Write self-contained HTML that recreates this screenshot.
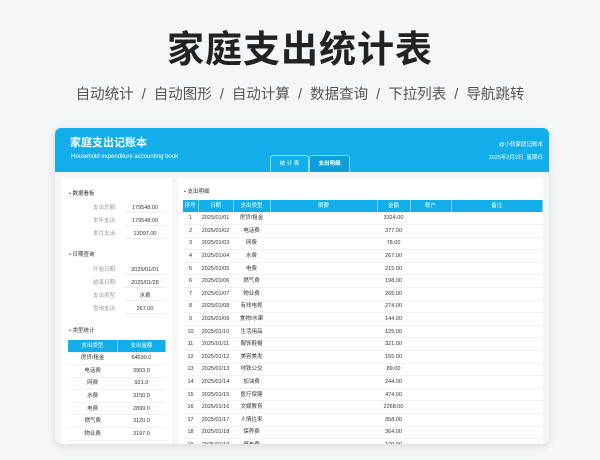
<!DOCTYPE html><html><head><meta charset="utf-8"><style>
*{margin:0;padding:0;box-sizing:border-box}
body{width:600px;height:460px;background:#f5f6f8;font-family:"Liberation Sans","Noto Sans CJK SC",sans-serif;position:relative;overflow:hidden;color:#333}
.a{position:absolute;white-space:nowrap;line-height:1.2}
h1{position:absolute;left:0;width:600px;top:27px;text-align:center;font-size:37px;font-weight:bold;color:#222;letter-spacing:1px;line-height:46px}
.sub{position:absolute;left:0;width:600px;top:85px;text-align:center;font-size:14.5px;color:#555;line-height:20px}
.card{position:absolute;left:55px;top:128px;width:494px;height:316px;background:#f3f5f7;border-radius:6px;overflow:hidden;box-shadow:0 2px 8px rgba(0,0,0,.12)}
.hd{position:absolute;left:0;top:0;width:494px;height:44px;background:#12aeea}
.tab{position:absolute;top:27px;height:17px;border:1px solid #8fd6f5;border-bottom:none;border-radius:3px 3px 0 0;color:#fff;font-size:5.5px;text-align:center;line-height:16px}
.pl{position:absolute;background:#fff}
table{border-collapse:collapse;font-size:5.5px;position:absolute}
td{height:12.6px;line-height:8px;text-align:center;vertical-align:middle;border-bottom:1px solid #f0f2f4;padding:0}
tr.h td{background:#12aeea;color:#fff;height:12px;border-right:1px solid #7fd2f3}
.lab{color:#999;font-size:5.5px}
.val{font-size:5.5px;border-bottom:1px solid #eee;width:42px;text-align:center}
.sec{font-size:5.5px;color:#333}
</style></head><body>
<h1>家庭支出统计表</h1>
<div class="sub">自动统计 &nbsp;/&nbsp; 自动图形 &nbsp;/&nbsp; 自动计算 &nbsp;/&nbsp; 数据查询 &nbsp;/&nbsp; 下拉列表 &nbsp;/&nbsp; 导航跳转</div>
<div class="card">
<div class="hd">
<div class="a" style="left:15px;top:9px;font-size:11px;font-weight:bold;color:#fff;line-height:13px">家庭支出记账本</div>
<div class="a" style="left:16px;top:26px;font-size:6px;color:#fff;line-height:7px">Household expenditure accounting book</div>
<div class="tab" style="left:215px;width:39px">统 计 表</div>
<div class="tab" style="left:254px;width:41px;background:#0c9fdb;font-weight:bold">支出明细</div>
<div class="a" style="right:6px;top:14px;font-size:5.5px;color:#fff;line-height:7px">@小软家庭记账本</div>
<div class="a" style="right:6px;top:27px;font-size:5.5px;color:#fff;line-height:7px">2025年2月2日 &nbsp;星期日</div>
</div>
<div class="pl" style="left:6px;top:50px;width:111px;height:270px">
<div class="a sec" style="left:8px;top:13px">• 数据看板</div>
<div class="a lab" style="left:32px;top:27px">支出总额:</div><div class="a val" style="left:63px;top:27px">179548.00</div>
<div class="a lab" style="left:32px;top:40px">本年支出:</div><div class="a val" style="left:63px;top:40px">179548.00</div>
<div class="a lab" style="left:32px;top:53px">本月支出:</div><div class="a val" style="left:63px;top:53px">13097.00</div>
<div class="a sec" style="left:8px;top:74px">• 日期查询</div>
<div class="a lab" style="left:32px;top:89px">开始日期:</div><div class="a val" style="left:63px;top:89px">2025/01/01</div>
<div class="a lab" style="left:32px;top:102px">结束日期:</div><div class="a val" style="left:63px;top:102px">2025/01/28</div>
<div class="a lab" style="left:32px;top:115px">支出类型:</div><div class="a val" style="left:63px;top:115px">水费</div>
<div class="a lab" style="left:32px;top:128px">查询支出:</div><div class="a val" style="left:63px;top:128px">267.00</div>
<div class="a sec" style="left:8px;top:150px">• 类型统计</div>
<table style="left:7px;top:162px;width:98px">
<tr class="h"><td>支出类型</td><td>支出金额</td></tr>
<tr><td>房贷/租金</td><td>64630.0</td></tr><tr><td>电话费</td><td>3903.0</td></tr><tr><td>网费</td><td>921.0</td></tr><tr><td>水费</td><td>3150.0</td></tr><tr><td>电费</td><td>2899.0</td></tr><tr><td>燃气费</td><td>3120.0</td></tr><tr><td>物业费</td><td>3197.0</td></tr>
</table>
</div>
<div class="pl" style="left:123px;top:50px;width:365px;height:270px">
<div class="a sec" style="left:6px;top:11px">• 支出明细</div>
<table style="left:5px;top:22px;width:360px">
<tr class="h"><td style="width:15px">序号</td><td style="width:35px">日期</td><td style="width:37px">支出类型</td><td style="width:107px">摘要</td><td style="width:33px">金额</td><td style="width:41px">账户</td><td>备注</td></tr>
<tr><td>1</td><td>2025/01/01</td><td>房贷/租金</td><td></td><td>3324.00</td><td></td><td></td></tr>
<tr><td>2</td><td>2025/01/02</td><td>电话费</td><td></td><td>377.00</td><td></td><td></td></tr>
<tr><td>3</td><td>2025/01/03</td><td>网费</td><td></td><td>78.00</td><td></td><td></td></tr>
<tr><td>4</td><td>2025/01/04</td><td>水费</td><td></td><td>267.00</td><td></td><td></td></tr>
<tr><td>5</td><td>2025/01/05</td><td>电费</td><td></td><td>215.00</td><td></td><td></td></tr>
<tr><td>6</td><td>2025/01/06</td><td>燃气费</td><td></td><td>198.00</td><td></td><td></td></tr>
<tr><td>7</td><td>2025/01/07</td><td>物业费</td><td></td><td>265.00</td><td></td><td></td></tr>
<tr><td>8</td><td>2025/01/08</td><td>有线电视</td><td></td><td>274.00</td><td></td><td></td></tr>
<tr><td>9</td><td>2025/01/09</td><td>食物/水果</td><td></td><td>144.00</td><td></td><td></td></tr>
<tr><td>10</td><td>2025/01/10</td><td>生活用品</td><td></td><td>125.00</td><td></td><td></td></tr>
<tr><td>11</td><td>2025/01/11</td><td>服饰鞋帽</td><td></td><td>321.00</td><td></td><td></td></tr>
<tr><td>12</td><td>2025/01/12</td><td>美容美发</td><td></td><td>155.00</td><td></td><td></td></tr>
<tr><td>13</td><td>2025/01/13</td><td>地铁公交</td><td></td><td>89.00</td><td></td><td></td></tr>
<tr><td>14</td><td>2025/01/14</td><td>加油费</td><td></td><td>244.00</td><td></td><td></td></tr>
<tr><td>15</td><td>2025/01/15</td><td>医疗保健</td><td></td><td>474.00</td><td></td><td></td></tr>
<tr><td>16</td><td>2025/01/16</td><td>文娱教育</td><td></td><td>2268.00</td><td></td><td></td></tr>
<tr><td>17</td><td>2025/01/17</td><td>人情往来</td><td></td><td>358.00</td><td></td><td></td></tr>
<tr><td>18</td><td>2025/01/18</td><td>保养费</td><td></td><td>364.00</td><td></td><td></td></tr>
<tr><td>19</td><td>2025/01/19</td><td>停车费</td><td></td><td>120.00</td><td></td><td></td></tr>
</table>
</div>
</div>
</body></html>
